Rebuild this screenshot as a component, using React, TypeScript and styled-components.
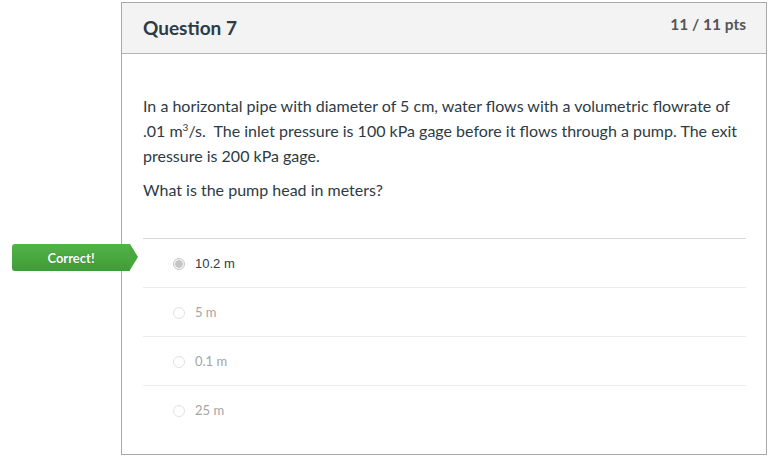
import React from 'react';
import styled, { createGlobalStyle } from 'styled-components';

const GlobalStyle = createGlobalStyle`
  html, body {
    margin: 0;
    padding: 0;
    background: #ffffff;
    font-family: Lato, "Open Sans", sans-serif;
    color: #2d3b45;
  }
`;

const Page = styled.div`
  padding: 2px 0 0 121px;
`;

const Card = styled.div`
  width: 644px;
  border: 1px solid #a9a9a9;
  background: #ffffff;
`;

const Header = styled.div`
  display: flex;
  align-items: center;
  justify-content: space-between;
  height: 50px;
  padding: 0 20px 0 21px;
  background: #f3f3f3;
  border-bottom: 1px solid #b5b5b5;
`;

const Title = styled.h2`
  margin: 0;
  padding-bottom: 1px;
  font-size: 19px;
  font-weight: 700;
  color: #2d3b45;
`;

const Points = styled.div`
  align-self: flex-start;
  padding-top: 12px;
  font-size: 15.5px;
  font-weight: 700;
  color: #555555;
`;

const Body = styled.div`
  padding: 39px 20px 20px 21px;
`;

const Para = styled.p`
  margin: 0 0 9px 0;
  font-size: 16px;
  line-height: 25px;
  color: #2d3b45;

  sup {
    font-size: 10px;
    line-height: 0;
    vertical-align: 6px;
  }
`;

const Answers = styled.div`
  margin-top: 36px;
`;

const AnswerRow = styled.div<{ $first?: boolean }>`
  position: relative;
  display: flex;
  align-items: center;
  height: 48px;
  padding-left: 30px;
  border-top: 1px solid ${p => (p.$first ? '#d9d9d9' : '#ececec')};
`;

const Radio = styled.span<{ $checked?: boolean }>`
  box-sizing: border-box;
  width: 12px;
  height: 12px;
  border-radius: 50%;
  border: 1px solid ${p => (p.$checked ? '#c8c8c8' : '#e2e2e2')};
  background: ${p => (p.$checked ? 'radial-gradient(circle, #c6c6c6 0 3.5px, #f2f2f2 4px)' : '#ffffff')};
  margin-right: 10px;
  margin-top: 1px;
`;

const AnswerText = styled.span<{ $checked?: boolean }>`
  font-family: ${p => (p.$checked ? '"Liberation Sans", Arial, sans-serif' : 'Lato, sans-serif')};
  font-size: 13px;
  color: ${p => (p.$checked ? '#2d3b45' : '#a5a5a5')};
`;

const Flag = styled.div`
  position: absolute;
  left: -131px;
  top: 5px;
  display: flex;
  align-items: center;
  justify-content: center;
  width: 118px;
  height: 27px;
  box-sizing: border-box;
  border-radius: 3px 0 0 3px;
  background: linear-gradient(#52b447, #3f9c37);
  color: #ffffff;
  font-size: 13px;
  font-weight: 700;
  text-shadow: 0 0 1px rgba(0, 0, 0, 0.4);

  &::after {
    content: '';
    position: absolute;
    right: -8px;
    top: 0;
    border-top: 13.5px solid transparent;
    border-bottom: 13.5px solid transparent;
    border-left: 8px solid #48a83f;
  }
`;

const answers = [
  { text: '10.2 m', checked: true },
  { text: '5 m' },
  { text: '0.1 m' },
  { text: '25 m' },
];

export default function App() {
  return (
    <Page>
      <GlobalStyle />
      <Card>
        <Header>
          <Title>Question 7</Title>
          <Points>11 / 11 pts</Points>
        </Header>
        <Body>
          <Para>
            In a horizontal pipe with diameter of 5 cm, water flows with a volumetric flowrate of
            .01 m<sup>3</sup>/s.&nbsp; The inlet pressure is 100 kPa gage before it flows through a pump. The exit
            pressure is 200 kPa gage.
          </Para>
          <Para>What is the pump head in meters?</Para>
          <Answers>
            {answers.map((a, i) => (
              <AnswerRow key={a.text} $first={i === 0}>
                {a.checked && <Flag>Correct!</Flag>}
                <Radio $checked={a.checked} />
                <AnswerText $checked={a.checked}>{a.text}</AnswerText>
              </AnswerRow>
            ))}
          </Answers>
        </Body>
      </Card>
    </Page>
  );
}
